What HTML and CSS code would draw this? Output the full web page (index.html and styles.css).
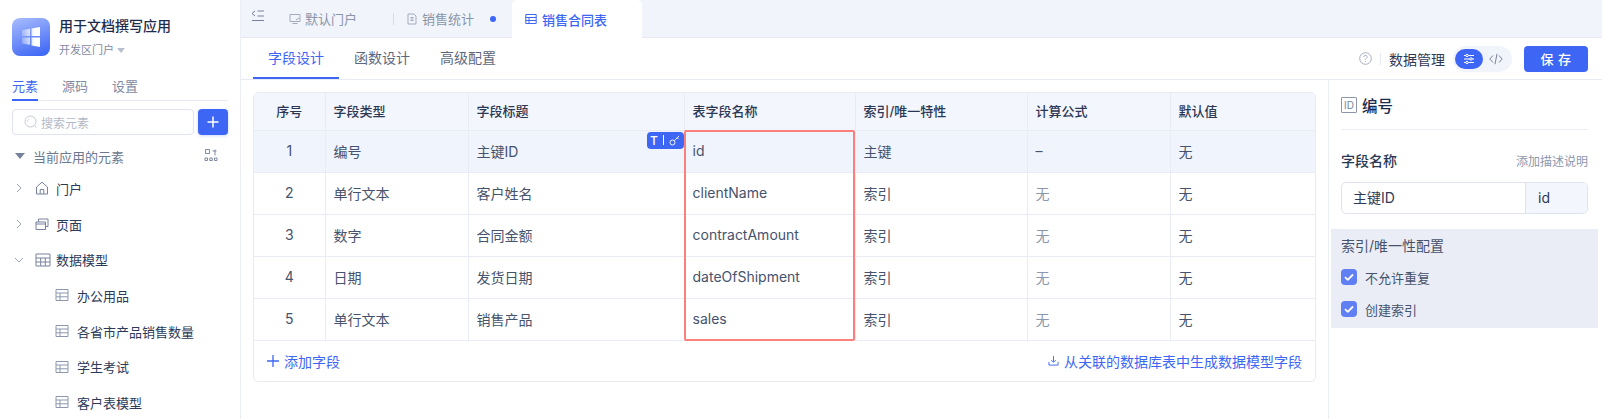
FILE: index.html
```html
<!DOCTYPE html>
<html lang="zh-CN">
<head>
<meta charset="utf-8">
<title>销售合同表</title>
<link rel="stylesheet" href="styles.css">
</head>
<body>
<div class="app">
  <aside class="side">
    <div class="brand">
      <div class="logo">
        <svg viewBox="0 0 38 38" width="38" height="38"><defs><linearGradient id="w" x1="1" y1="0" x2="0" y2="0"><stop offset="0.3" stop-color="#fff"/><stop offset="1" stop-color="#fff" stop-opacity=".25"/></linearGradient></defs><path fill="url(#w)" d="M10 12l8-1.300V18h-8zM19.500 10.400L28 9v9h-8.500zM10 19.500h8v7.300l-8-1.300zM19.500 19.500H28V29l-8.500-1.400z"/></svg>
      </div>
      <div class="brand-text">
        <div class="brand-name">用于文档撰写应用</div>
        <div class="brand-sub">开发区门户 <span class="caret"></span></div>
      </div>
    </div>
    <nav class="side-tabs">
      <span class="side-tab on">元素</span><span class="side-tab">源码</span><span class="side-tab">设置</span>
    </nav>
    <div class="search-row">
      <div class="search">
        <svg class="i14" viewBox="0 0 14 14"><circle cx="6.500" cy="6.500" r="5.500" fill="none" stroke="#c3c9d6"/><path d="M10.500 10.500l2 2M3.500 6.500a3 3 0 0 1 1-2.200" fill="none" stroke="#c3c9d6"/></svg>
        <span>搜索元素</span>
      </div>
      <button class="add"><svg viewBox="0 0 14 14" width="14" height="14"><path d="M7 1.500v11M1.500 7h11" stroke="#fff" stroke-width="1.500"/></svg></button>
    </div>
    <div class="group">
      <span class="tri"></span><span class="group-name">当前应用的元素</span>
      <svg class="group-ic" viewBox="0 0 14 14" width="14" height="14"><path d="M1.500 1.500h4v4h-4zM1 10h2.500v2.500H1zM5.800 10h2.500v2.500H5.800zM10.500 10h2.500v2.500h-2.500zM8.500 3h4M11 1.500v6" fill="none" stroke="#7f8aa3"/></svg>
    </div>
    <ul class="tree">
      <li class="node"><svg class="arrow" viewBox="0 0 10 10"><path d="M3 1l4 4-4 4" fill="none" stroke="#9aa3b5"/></svg>
        <svg class="nic" viewBox="0 0 14 14"><path d="M1.500 6L7 1.200 12.500 6v7h-11zM5.200 13V8.500h3.600V13" fill="none" stroke="#76829c"/></svg><span>门户</span></li>
      <li class="node"><svg class="arrow" viewBox="0 0 10 10"><path d="M3 1l4 4-4 4" fill="none" stroke="#9aa3b5"/></svg>
        <svg class="nic" viewBox="0 0 14 14"><path d="M1 5h9.500v7.500H1zM3.500 5V2H13v7.500h-2.500" fill="none" stroke="#76829c"/><path d="M1 7h9.500" stroke="#76829c"/></svg><span>页面</span></li>
      <li class="node"><svg class="arrow" viewBox="0 0 10 10"><path d="M1 3l4 4 4-4" fill="none" stroke="#9aa3b5"/></svg>
        <svg class="nic wide" viewBox="0 0 16 14"><path d="M1 1h14v12H1zM1 5h14M1 9h14M5.700 5v8M10.300 5v8" fill="none" stroke="#76829c"/></svg><span>数据模型</span></li>
      <li class="node sub"><svg class="tic" viewBox="0 0 14 14"><path d="M1 1.500h12v11H1zM1 5h12M1 8.800h12M5 5v7.500" fill="none" stroke="#8c97ae"/></svg><span>办公用品</span></li>
      <li class="node sub"><svg class="tic" viewBox="0 0 14 14"><path d="M1 1.500h12v11H1zM1 5h12M1 8.800h12M5 5v7.500" fill="none" stroke="#8c97ae"/></svg><span>各省市产品销售数量</span></li>
      <li class="node sub"><svg class="tic" viewBox="0 0 14 14"><path d="M1 1.500h12v11H1zM1 5h12M1 8.800h12M5 5v7.500" fill="none" stroke="#8c97ae"/></svg><span>学生考试</span></li>
      <li class="node sub"><svg class="tic" viewBox="0 0 14 14"><path d="M1 1.500h12v11H1zM1 5h12M1 8.800h12M5 5v7.500" fill="none" stroke="#8c97ae"/></svg><span>客户表模型</span></li>
    </ul>
  </aside>
  <main class="main">
    <header class="topbar">
      <svg class="collapse" viewBox="0 0 14 12" width="14" height="12"><path d="M4 1L1 3.500 4 6M6.500 1H13M6.500 6H13M1 10.500h12" fill="none" stroke="#76829c"/></svg>
      <div class="ptab">
        <svg class="i12" viewBox="0 0 12 12"><path d="M1 1.500h10v7H1zM3.500 10.500h5" fill="none" stroke="#a2abbc"/><path d="M7 7l3-2" stroke="#a2abbc"/></svg>
        <span>默认门户</span>
      </div>
      <i class="tsep"></i>
      <div class="ptab second">
        <svg class="i12" viewBox="0 0 12 12"><path d="M2 1h6l2 2v8H2zM4.500 4.500h3M4.500 6h3M4.500 7.500h3" fill="none" stroke="#a2abbc"/></svg>
        <span>销售统计</span><i class="dot"></i>
      </div>
      <div class="ptab active">
        <svg class="i12" viewBox="0 0 12 12"><path d="M.8 1.500h10.400v9H.8zM.8 4.500h10.400M.8 7.500h10.400M4 4.500v6" fill="none" stroke="#3d66f5"/></svg>
        <span>销售合同表</span>
      </div>
    </header>
    <div class="subbar">
      <nav class="stabs">
        <span class="stab on">字段设计</span><span class="stab">函数设计</span><span class="stab">高级配置</span>
      </nav>
      <div class="tools">
        <svg class="i13" viewBox="0 0 13 13"><circle cx="6.500" cy="6.500" r="5.800" fill="none" stroke="#a7afc0"/><path d="M4.800 5a1.700 1.700 0 1 1 2.500 1.500c-.6.300-.8.600-.8 1.200M6.500 9v.8" fill="none" stroke="#a7afc0"/></svg>
        <i class="vsep"></i>
        <span class="dm">数据管理</span>
        <div class="switch">
          <span class="sw on"><svg viewBox="0 0 12 12" width="12" height="12"><path d="M1 2.500h10M1 6h10M1 9.500h10" stroke="#fff"/><circle cx="4" cy="2.500" r="1.200" fill="#3d66f5" stroke="#fff"/><circle cx="8" cy="6" r="1.200" fill="#3d66f5" stroke="#fff"/><circle cx="4" cy="9.500" r="1.200" fill="#3d66f5" stroke="#fff"/></svg></span>
          <span class="sw"><svg viewBox="0 0 14 12" width="14" height="12"><path d="M4 2.500L.8 6 4 9.500M10 2.500L13.200 6 10 9.500M8 .8L6 11.200" fill="none" stroke="#76829c"/></svg></span>
        </div>
        <button class="save">保 存</button>
      </div>
    </div>
    <div class="body">
      <section class="content">
        <div class="tbl">
          <table>
            <colgroup><col class="c1"><col class="c2"><col class="c3"><col class="c4"><col class="c5"><col class="c6"><col class="c7"></colgroup>
            <thead><tr><th class="ct">序号</th><th>字段类型</th><th>字段标题</th><th>表字段名称</th><th>索引/唯一特性</th><th>计算公式</th><th>默认值</th></tr></thead>
            <tbody>
              <tr class="sel"><td class="ct">1</td><td>编号</td><td class="rel">主键ID<span class="badge"><b>T</b><i></i><svg viewBox="0 0 12 12" width="11" height="11"><circle cx="3.800" cy="8.200" r="2.700" fill="none" stroke="#fff"/><path d="M5.800 6.200L11 1M9 3l1.500 1.500" fill="none" stroke="#fff"/></svg></span></td><td>id</td><td>主键</td><td>–</td><td>无</td></tr>
              <tr><td class="ct">2</td><td>单行文本</td><td>客户姓名</td><td>clientName</td><td>索引</td><td class="mute">无</td><td>无</td></tr>
              <tr><td class="ct">3</td><td>数字</td><td>合同金额</td><td>contractAmount</td><td>索引</td><td class="mute">无</td><td>无</td></tr>
              <tr><td class="ct">4</td><td>日期</td><td>发货日期</td><td>dateOfShipment</td><td>索引</td><td class="mute">无</td><td>无</td></tr>
              <tr><td class="ct">5</td><td>单行文本</td><td>销售产品</td><td>sales</td><td>索引</td><td class="mute">无</td><td>无</td></tr>
            </tbody>
          </table>
          <div class="tfoot">
            <span class="link"><svg viewBox="0 0 12 12" width="12" height="12"><path d="M6 0v12M0 6h12" stroke="#3d66f5" stroke-width="1.300"/></svg>添加字段</span>
            <span class="link gen"><svg viewBox="0 0 12 12" width="11" height="11"><path d="M6 1v6.500M3.500 5.500L6 8l2.500-2.500M1 7.500V11h10V7.500" fill="none" stroke="#3d66f5"/></svg>从关联的数据库表中生成数据模型字段</span>
          </div>
          <div class="redbox"></div>
        </div>
      </section>
      <aside class="panel">
        <div class="ph"><span class="idic">ID</span><span>编号</span></div>
        <div class="lbl-row"><span class="lbl">字段名称</span><span class="desc">添加描述说明</span></div>
        <div class="inp"><span class="inp-a">主键ID</span><span class="inp-b">id</span></div>
        <div class="cfg">
          <div class="cfg-t">索引/唯一性配置</div>
          <label class="chk"><i class="box"><svg viewBox="0 0 16 16" width="16" height="16"><path d="M4 8.200l2.800 2.600L12 5.500" fill="none" stroke="#fff" stroke-width="1.800"/></svg></i>不允许重复</label>
          <label class="chk"><i class="box"><svg viewBox="0 0 16 16" width="16" height="16"><path d="M4 8.200l2.800 2.600L12 5.500" fill="none" stroke="#fff" stroke-width="1.800"/></svg></i>创建索引</label>
        </div>
      </aside>
    </div>
  </main>
</div>
</body>
</html>
```
FILE: styles.css
```css
* { box-sizing: border-box; }
html, body { margin: 0; height: 100%; overflow: hidden; }
body { font-family: Inter, "Noto Sans CJK SC", sans-serif; font-size: 14px; color: #2c3a57; background: #fff; }
svg { display: block; flex: none; }
ul { list-style: none; margin: 0; padding: 0; }
.app { display: flex; width: 1602px; height: 419px; }

.side { width: 241px; flex: none; border-right: 1px solid #eceef5; padding: 18px 12px 0; }
.brand { display: flex; gap: 9px; }
.logo { width: 38px; height: 38px; border-radius: 8px; background: linear-gradient(160deg, #a9bdfd 0%, #3d66f5 95%); }
.brand-name { font-size: 14px; font-weight: 500; line-height: 17px; color: #1d2b4d; margin-top: -1px; }
.brand-sub { font-size: 11px; line-height: 14px; margin-top: 9px; color: #7f8aa3; display: flex; align-items: center; gap: 3px; }
.caret { width: 0; height: 0; border: 4px solid transparent; border-top: 5px solid #b8bfce; border-bottom: 0; }
.side-tabs { display: flex; gap: 24px; margin-top: 18px; border-bottom: 1px solid #e9ebf3; height: 26px; }
.side-tab { line-height: 22px; font-size: 13px; color: #7f8aa3; height: 26px; width: 26px; white-space: nowrap; }
.side-tab.on { color: #3d66f5; border-bottom: 2px solid #3d66f5; }
.search-row { display: flex; gap: 4px; margin-top: 8px; }
.search { width: 182px; height: 26px; border: 1px solid #dfe3ee; border-radius: 4px; display: flex; align-items: center; gap: 3px; padding-left: 11px; color: #b3bac9; font-size: 12px; }
.i14 { width: 14px; height: 14px; }
.add { width: 30px; height: 26px; border: 0; border-radius: 4px; padding: 0; background: #3d66f5; display: flex; align-items: center; justify-content: center; box-shadow: 0 1px 3px rgba(61,102,245,.25); }
.group { display: flex; align-items: center; margin-top: 8px; height: 26px; padding-left: 3px; font-size: 13px; color: #6c7890; }
.tri { width: 0; height: 0; border: 5px solid transparent; border-top: 6px solid #76829c; border-bottom: 0; margin-right: 8px; }
.group-name { flex: 1; }
.group-ic { margin-right: 10px; margin-top: -3px; }
.tree { margin-top: 1.500px; }
.node { display: flex; align-items: center; height: 35.700px; padding-left: 2px; font-size: 13px; color: #2c3a57; }
.arrow { width: 10px; height: 10px; margin-right: 11px; }
.nic { width: 14px; height: 14px; margin-right: 7px; }
.nic.wide { width: 16px; margin-right: 5px; }
.sub { padding-left: 43px; }
.tic { width: 14px; height: 14px; margin-right: 8px; }

.main { flex: 1; min-width: 0; display: flex; flex-direction: column; }
.topbar { height: 38px; flex: none; background: #f1f4fb; border-bottom: 1px solid #e6e9f2; display: flex; align-items: center; padding-left: 10px; font-size: 13px; color: #8a94a8; }
.collapse { margin-top: -6px; margin-right: 24px; }
.ptab { display: flex; align-items: center; gap: 4px; height: 37px; white-space: nowrap; }
.i12 { width: 12px; height: 12px; }
.tsep { width: 1px; height: 12px; background: #d9dde7; margin-left: 36px; }
.second { margin-left: 12px; }
.dot { width: 6px; height: 6px; border-radius: 50%; background: #3d66f5; margin-left: 12px; }
.active { margin-left: 16px; width: 130px; padding-left: 13px; background: #fff; color: #3d66f5; font-weight: 500; border-radius: 5px 5px 0 0; height: 38px; margin-top: 1px; gap: 5px; }

.subbar { height: 42px; flex: none; border-bottom: 1px solid #e9ebf3; display: flex; justify-content: space-between; align-items: stretch; padding: 0 14px 0 12px; }
.stabs { display: flex; }
.stab { width: 86px; text-align: center; line-height: 39px; font-size: 14px; color: #5c6880; }
.stab.on { color: #3d66f5; border-bottom: 2px solid #3d66f5; }
.tools { display: flex; align-items: center; }
.i13 { width: 13px; height: 13px; }
.vsep { width: 1px; height: 12px; background: #e6e9f1; margin: 0 8px; }
.dm { font-size: 14px; color: #2c3a57; white-space: nowrap; }
.switch { display: flex; align-items: center; width: 59px; height: 26px; border-radius: 13px; background: #f1f4fb; margin-left: 8px; padding: 2px; }
.sw { width: 28px; height: 20px; border-radius: 10px; display: flex; align-items: center; justify-content: center; }
.sw.on { background: #3d66f5; }
.save { width: 64px; height: 26px; margin-left: 12px; border: 0; border-radius: 4px; background: #3d66f5; color: #fff; font: 500 13px Inter, "Noto Sans CJK SC", sans-serif; letter-spacing: .5px; padding: 0; }

.body { flex: 1; min-height: 0; display: flex; }
.content { width: 1087px; flex: none; padding: 12px 0 0 12px; background: #fff; }
.tbl { position: relative; width: 1063px; border: 1px solid #e9ebf3; border-radius: 5px; }
table { width: 100%; border-collapse: collapse; table-layout: fixed; font-size: 14px; }
.c1 { width: 71px; } .c2 { width: 143px; } .c3 { width: 216px; } .c4 { width: 171px; } .c5 { width: 172px; } .c6 { width: 143px; } .c7 { width: 145px; }
th, td { border: 1px solid #e9ecf4; padding: 0 8px 1px; text-align: left; white-space: nowrap; }
tr > :first-child { border-left: 0; }
tr > :last-child { border-right: 0; }
thead tr > * { border-top: 0; }
th { height: 37px; background: #f3f6fc; font-size: 13px; font-weight: 500; color: #2a3755; }
td { height: 42px; color: #46536d; }
.ct { text-align: center; }
.sel td { background: #f0f4fd; }
.mute { color: #8c97ae; }
.rel { position: relative; }
.badge { position: absolute; right: 0; top: 1px; width: 37px; height: 17px; background: #3d66f5; border-radius: 4px; color: #fff; display: flex; align-items: center; justify-content: center; gap: 5px; font-size: 12px; }
.badge b { font-weight: 500; }
.badge i { width: 1px; height: 10px; background: #fff; }
.tfoot { height: 40px; display: flex; justify-content: space-between; align-items: center; padding: 0 13px; font-size: 14px; color: #3d66f5; }
.link { display: flex; align-items: center; gap: 5px; white-space: nowrap; }
.redbox { position: absolute; left: 430px; top: 37px; width: 171px; height: 211px; border: 2px solid #fb7f7c; border-radius: 2px; pointer-events: none; }

.panel { flex: 1; border-left: 1px solid #eceef5; padding: 0 14px 0 12px; }
.ph { display: flex; align-items: center; gap: 5px; height: 50px; border-bottom: 1px solid #eceef5; font-size: 15.500px; font-weight: 500; color: #1d2b4d; }
.idic { width: 16px; height: 16px; border: 1px solid #8c97ae; border-radius: 1px; font-size: 10px; font-weight: 400; color: #76829c; display: flex; align-items: center; justify-content: center; }
.lbl-row { display: flex; justify-content: space-between; align-items: center; margin-top: 21px; height: 18px; }
.lbl { font-size: 14px; font-weight: 500; color: #2a3755; }
.desc { font-size: 12px; color: #8c97ae; }
.inp { display: flex; height: 32px; margin-top: 13px; border: 1px solid #dfe3ee; border-radius: 5px; overflow: hidden; font-size: 14px; }
.inp-a { flex: 1; padding-left: 11px; line-height: 30px; color: #2c3a57; }
.inp-b { width: 62px; padding-left: 12px; line-height: 30px; background: #f3f6fc; border-left: 1px solid #dfe3ee; color: #2c3a57; }
.cfg { margin: 15px -10px 0 -10px; padding: 9px 10px 0; height: 99px; background: #eaedf5; }
.cfg-t { font-size: 14px; font-weight: 400; color: #46536d; line-height: 16px; }
.chk { display: flex; align-items: center; gap: 8px; height: 32px; font-size: 13px; color: #46536d; }
.cfg-t + .chk { margin-top: 7px; }
.box { width: 16px; height: 16px; border-radius: 4px; background: #5f7ff2; }
```
